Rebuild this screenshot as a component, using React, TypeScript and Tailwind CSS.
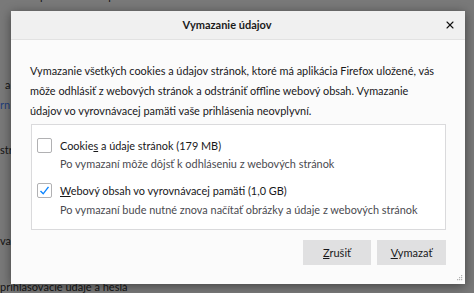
import { X } from "lucide-react";

const font = { fontFamily: 'Lato, "Noto Sans", sans-serif' };

function Check({ checked }: { checked: boolean }) {
    return (
        <div className="w-[15px] h-[15px] shrink-0 rounded-[2px] border border-[#b1b1b3] bg-white flex items-center justify-center">
            {checked && (
                <svg width="11" height="11" viewBox="0 0 11 11">
                    <path d="M1.5 6 L4.2 8.8 L9.5 1.8" fill="none" stroke="#0a84ff" strokeWidth="1.4" />
                </svg>
            )}
        </div>
    );
}

export default function App() {
    return (
        <div className="relative w-[474px] h-[293px] overflow-hidden bg-[#797979] text-[#141414]" style={font}>
            {/* page behind the dialog */}
            <div className="flex flex-col text-[11px] leading-[20px]">
                <div className="-mt-[14px] pl-[40px]">pri zatvorení aplikácie Firefox</div>
                <div className="h-[69px]" />
                <div className="pl-[5px]">a</div>
                <div className="text-[#233e7c]">rn</div>
                <div className="h-[25px]" />
                <div>str</div>
                <div className="h-[71px]" />
                <div>va</div>
                <div className="h-[26px]" />
                <div>prihlasovacie údaje a heslá</div>
            </div>

            {/* dialog */}
            <div className="absolute left-[11px] top-[11px] w-[454px] h-[273px] flex flex-col bg-[#fbfbfb] shadow-[0_2px_10px_rgba(0,0,0,0.45)]">
                <div className="h-[29px] shrink-0 flex items-center bg-[#f0f0f0] border-b border-[#e2e2e2]">
                    <div className="flex-1 pl-[8px] text-center text-[11px] font-bold text-[#1b1b1b]">
                        Vymazanie údajov
                    </div>
                    <div className="w-[30px] flex items-center justify-center">
                        <X size={12} strokeWidth={2.2} className="text-[#111]" />
                    </div>
                </div>

                <div className="flex-1 flex flex-col px-[19px] pt-[21px] text-[10.9px] leading-[20px] text-[#18181a]">
                    <p>
                        Vymazanie všetkých cookies a údajov stránok, ktoré má aplikácia Firefox uložené, vás
                        <br />
                        môže odhlásiť z webových stránok a odstrániť offline webový obsah. Vymazanie
                        <br />
                        údajov vo vyrovnávacej pamäti vaše prihlásenia neovplyvní.
                    </p>

                    <div className="mt-[3px] ml-[1px] h-[106px] flex flex-col gap-[9px] border border-[#dadadc] bg-white px-[5px] pt-[11px]">
                        <div className="flex gap-[8px]">
                            <div className="pt-[2px]">
                                <Check checked={false} />
                            </div>
                            <div className="flex flex-col">
                                <span className="leading-[19px]">
                                    Cookie<span className="underline">s</span> a údaje stránok (179 MB)
                                </span>
                                <span className="leading-[17px] text-[#4a4a4f]">
                                    Po vymazaní môže dôjsť k odhláseniu z webových stránok
                                </span>
                            </div>
                        </div>
                        <div className="flex gap-[8px]">
                            <div className="pt-[2px]">
                                <Check checked />
                            </div>
                            <div className="flex flex-col">
                                <span className="leading-[19px]">
                                    <span className="underline">W</span>ebový obsah vo vyrovnávacej pamäti (1,0 GB)
                                </span>
                                <span className="leading-[20px] text-[#4a4a4f]">
                                    Po vymazaní bude nutné znova načítať obrázky a údaje z webových stránok
                                </span>
                            </div>
                        </div>
                    </div>

                    <div className="mt-[10px] flex justify-end gap-[6px]">
                        <button className="w-[68px] h-[25px] bg-[#e0e0e1] text-[11px]">
                            <span className="underline">Z</span>rušiť
                        </button>
                        <button className="w-[69px] h-[25px] bg-[#e0e0e1] text-[11px]">
                            <span className="underline">V</span>ymazať
                        </button>
                    </div>
                </div>

                <svg className="absolute right-[2px] bottom-[2px]" width="7" height="7" viewBox="0 0 7 7">
                    <g fill="#b0b0b0">
                        <rect x="5" y="0" width="1.2" height="1.2" />
                        <rect x="3" y="2" width="1.2" height="1.2" />
                        <rect x="5" y="2" width="1.2" height="1.2" />
                        <rect x="1" y="4" width="1.2" height="1.2" />
                        <rect x="3" y="4" width="1.2" height="1.2" />
                        <rect x="5" y="4" width="1.2" height="1.2" />
                    </g>
                </svg>
            </div>
        </div>
    );
}
